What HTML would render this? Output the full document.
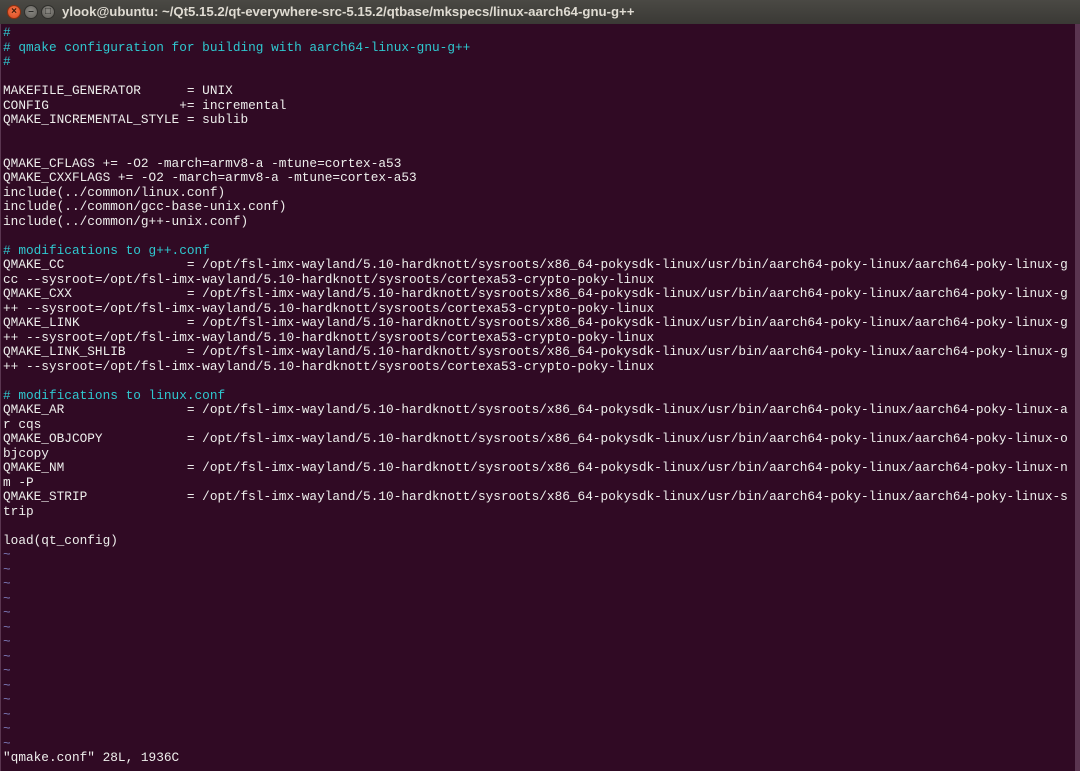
<!DOCTYPE html>
<html><head><meta charset="utf-8"><style>
html,body{margin:0;padding:0;width:1080px;height:771px;overflow:hidden;background:#300a24}
.tb{position:absolute;left:0;top:0;width:1080px;height:24px;background:linear-gradient(#4a4944,#3a3935);}
.tb .t{position:absolute;left:62px;top:4px;font:bold 13.2px "Liberation Sans",sans-serif;color:#dfdbd2;white-space:nowrap}
.b{position:absolute;top:5px;width:14px;height:14px;border-radius:50%;box-sizing:border-box}
.r{left:7px;background:radial-gradient(circle at 50% 40%,#f4774a,#d9481f);border:1px solid #8a3010}
.g1{left:24px;background:radial-gradient(circle at 50% 40%,#8a8883,#5f5d58);border:1px solid #2f2e2b}
.g2{left:41px;background:radial-gradient(circle at 50% 40%,#8a8883,#5f5d58);border:1px solid #2f2e2b}
.b span{position:absolute;left:0;top:0;width:12px;height:12px;font:bold 10px "Liberation Sans",sans-serif;line-height:12px;text-align:center;color:#3a1a0a}
pre{position:absolute;left:3px;top:26px;margin:0;font-family:"Liberation Mono",monospace;font-size:12.77px;line-height:14.5px;color:#eeeeec}
.c{color:#2fc8d0}.n{color:#7c7ab8}
.edge{position:absolute;left:1075px;top:24px;width:5px;height:747px;background:#5a3550}
.ledge{position:absolute;left:0;top:24px;width:1px;height:747px;background:#5a3550}
</style></head><body>
<div class="tb"><div class="b r"><span>×</span></div><div class="b g1"><span style="color:#2a2a28">–</span></div><div class="b g2"><span style="color:#2a2a28">□</span></div>
<div class="t">ylook@ubuntu: ~/Qt5.15.2/qt-everywhere-src-5.15.2/qtbase/mkspecs/linux-aarch64-gnu-g++</div></div>
<div class="edge"></div><div class="ledge"></div>
<pre><span class="c">#
# qmake configuration for building with aarch64-linux-gnu-g++
#</span>

MAKEFILE_GENERATOR      = UNIX
CONFIG                 += incremental
QMAKE_INCREMENTAL_STYLE = sublib


QMAKE_CFLAGS += -O2 -march=armv8-a -mtune=cortex-a53
QMAKE_CXXFLAGS += -O2 -march=armv8-a -mtune=cortex-a53
include(../common/linux.conf)
include(../common/gcc-base-unix.conf)
include(../common/g++-unix.conf)

<span class="c"># modifications to g++.conf</span>
QMAKE_CC                = /opt/fsl-imx-wayland/5.10-hardknott/sysroots/x86_64-pokysdk-linux/usr/bin/aarch64-poky-linux/aarch64-poky-linux-g
cc --sysroot=/opt/fsl-imx-wayland/5.10-hardknott/sysroots/cortexa53-crypto-poky-linux
QMAKE_CXX               = /opt/fsl-imx-wayland/5.10-hardknott/sysroots/x86_64-pokysdk-linux/usr/bin/aarch64-poky-linux/aarch64-poky-linux-g
++ --sysroot=/opt/fsl-imx-wayland/5.10-hardknott/sysroots/cortexa53-crypto-poky-linux
QMAKE_LINK              = /opt/fsl-imx-wayland/5.10-hardknott/sysroots/x86_64-pokysdk-linux/usr/bin/aarch64-poky-linux/aarch64-poky-linux-g
++ --sysroot=/opt/fsl-imx-wayland/5.10-hardknott/sysroots/cortexa53-crypto-poky-linux
QMAKE_LINK_SHLIB        = /opt/fsl-imx-wayland/5.10-hardknott/sysroots/x86_64-pokysdk-linux/usr/bin/aarch64-poky-linux/aarch64-poky-linux-g
++ --sysroot=/opt/fsl-imx-wayland/5.10-hardknott/sysroots/cortexa53-crypto-poky-linux

<span class="c"># modifications to linux.conf</span>
QMAKE_AR                = /opt/fsl-imx-wayland/5.10-hardknott/sysroots/x86_64-pokysdk-linux/usr/bin/aarch64-poky-linux/aarch64-poky-linux-a
r cqs
QMAKE_OBJCOPY           = /opt/fsl-imx-wayland/5.10-hardknott/sysroots/x86_64-pokysdk-linux/usr/bin/aarch64-poky-linux/aarch64-poky-linux-o
bjcopy
QMAKE_NM                = /opt/fsl-imx-wayland/5.10-hardknott/sysroots/x86_64-pokysdk-linux/usr/bin/aarch64-poky-linux/aarch64-poky-linux-n
m -P
QMAKE_STRIP             = /opt/fsl-imx-wayland/5.10-hardknott/sysroots/x86_64-pokysdk-linux/usr/bin/aarch64-poky-linux/aarch64-poky-linux-s
trip

load(qt_config)
<span class="n">~
~
~
~
~
~
~
~
~
~
~
~
~
~</span>
"qmake.conf" 28L, 1936C</pre>
</body></html>
